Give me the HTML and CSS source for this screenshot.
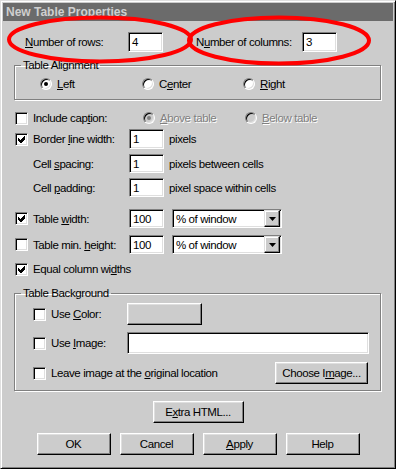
FILE: index.html
```html
<!DOCTYPE html>
<html>
  <head>
    <meta charset="UTF-8">
    <title>New Table Properties</title>
    <link rel="stylesheet" href="styles.css">
  </head>
  <body>
    <div class="window">
      <div class="titlebar">New Table Properties</div>

      <div class="row counts">
        <span class="lbl lbl-rows"><u>N</u>umber of rows:</span>
        <span class="field w35">4</span>
        <span class="lbl lbl-cols">N<u>u</u>mber of columns:</span>
        <span class="field w35">3</span>
      </div>

      <fieldset class="group align">
        <legend>Table Alignment</legend>
        <div class="radios">
          <span class="opt"><i class="radio on"></i><u>L</u>eft</span>
          <span class="opt"><i class="radio"></i>C<u>e</u>nter</span>
          <span class="opt"><i class="radio"></i><u>R</u>ight</span>
        </div>
      </fieldset>

      <div class="row line caption">
        <i class="check"></i>
        <span class="lbl w110">Include cap<u>t</u>ion:</span>
        <span class="opt off w102"><i class="radio on"></i><u>A</u>bove table</span>
        <span class="opt off"><i class="radio"></i><u>B</u>elow table</span>
      </div>

      <div class="row line r-border">
        <i class="check on"><svg width="7" height="7" viewBox="0 0 7 7"><polygon points="0,2 2,4 6,0 7,0 7,3 3,7 2,7 0,5"/></svg></i>
        <span class="lbl w96">Border <u>l</u>ine width:</span>
        <span class="field w35">1</span>
        <span class="unit">pixels</span>
      </div>

      <div class="row line short r-spacing">
        <i class="nobox"></i>
        <span class="lbl w96">Cell <u>s</u>pacing:</span>
        <span class="field w35">1</span>
        <span class="unit">pixels between cells</span>
      </div>

      <div class="row line short r-padding">
        <i class="nobox"></i>
        <span class="lbl w96">Cell <u>p</u>adding:</span>
        <span class="field w35">1</span>
        <span class="unit">pixel space within cells</span>
      </div>

      <div class="row line short r-width">
        <i class="check on"><svg width="7" height="7" viewBox="0 0 7 7"><polygon points="0,2 2,4 6,0 7,0 7,3 3,7 2,7 0,5"/></svg></i>
        <span class="lbl w96">Table <u>w</u>idth:</span>
        <span class="field w35">100</span>
        <span class="field select"><span class="sel-text">% of window</span><span class="drop"><svg width="7" height="4" viewBox="0 0 7 4"><polygon points="0,0 7,0 3.5,4"/></svg></span></span>
      </div>

      <div class="row line short r-height">
        <i class="check"></i>
        <span class="lbl w96">Table min. <u>h</u>eight:</span>
        <span class="field w35">100</span>
        <span class="field select"><span class="sel-text">% of window</span><span class="drop"><svg width="7" height="4" viewBox="0 0 7 4"><polygon points="0,0 7,0 3.5,4"/></svg></span></span>
      </div>

      <div class="row line r-equal">
        <i class="check on"><svg width="7" height="7" viewBox="0 0 7 7"><polygon points="0,2 2,4 6,0 7,0 7,3 3,7 2,7 0,5"/></svg></i>
        <span class="lbl">Equal column wi<u>d</u>ths</span>
      </div>

      <fieldset class="group background">
        <legend>Table Background</legend>
        <div class="row bg-row first">
          <i class="check"></i>
          <span class="lbl w76">Use <u>C</u>olor:</span>
          <span class="button color-btn"></span>
        </div>
        <div class="row bg-row">
          <i class="check"></i>
          <span class="lbl w76">Use <u>I</u>mage:</span>
          <span class="field image-path"></span>
        </div>
        <div class="row bg-row">
          <i class="check"></i>
          <span class="lbl grow">Leave image at the <u>o</u>riginal location</span>
          <span class="button choose-btn">Choose I<u>m</u>age...</span>
        </div>
      </fieldset>

      <div class="row extra">
        <span class="button extra-btn">E<u>x</u>tra HTML...</span>
      </div>

      <div class="row actions">
        <span class="button act">OK</span>
        <span class="button act">Cancel</span>
        <span class="button act"><u>A</u>pply</span>
        <span class="button act">Help</span>
      </div>

      <!-- red annotation marks drawn over the dialog -->
      <svg class="marks" width="396" height="469" viewBox="0 0 396 469">
        <ellipse cx="100" cy="39.5" rx="91" ry="22" />
        <ellipse cx="279" cy="40.5" rx="90" ry="23" />
      </svg>
    </div>
  </body>
</html>
```

FILE: styles.css
```css
html, body {
    margin: 0;
    padding: 0;
    background: #cccccc;
}
body {
    font-family: "Liberation Sans", Arial, sans-serif;
    font-size: 11.5px;
    letter-spacing: -0.4px;
    color: #000;
}
u {
    text-underline-offset: 1px;
}

.window {
    position: relative;
    box-sizing: border-box;
    width: 396px;
    height: 469px;
    padding: 2px;
    background: #cccccc;
    border: 1px solid;
    border-color: #dfdfdf #000 #000 #dfdfdf;
    box-shadow: inset 1px 1px 0 #fff, inset -1px -1px 0 #808080;
}
.titlebar {
    height: 18px;
    line-height: 18px;
    padding-left: 3px;
    background: #6b6b6b;
    color: #cfcfcf;
    font-weight: bold;
    font-size: 12px;
    letter-spacing: 0;
}

.row {
    display: flex;
    align-items: center;
}
.lbl {
    white-space: nowrap;
}
.w35 { width: 35px; }
.w76 { width: 76px; }
.w96 { width: 96px; }
.w102 { width: 102px; }
.w110 { width: 110px; }
.grow { flex: 1; }

/* sunken text box */
.field {
    box-sizing: border-box;
    height: 100%;
    padding: 0 3px;
    display: flex;
    align-items: center;
    background: #fff;
    border: 1px solid;
    border-color: #808080 #fff #fff #808080;
    box-shadow: inset 1px 1px 0 #000, inset -1px -1px 0 #dfdfdf;
}

/* raised push button */
.button {
    box-sizing: border-box;
    display: flex;
    align-items: center;
    justify-content: center;
    height: 22px;
    background: #cccccc;
    border: 1px solid;
    border-color: #fff #000 #000 #fff;
    box-shadow: inset -1px -1px 0 #808080, inset 1px 1px 0 #dfdfdf;
}

.check {
    box-sizing: border-box;
    display: flex;
    align-items: center;
    justify-content: center;
    width: 13px;
    height: 13px;
    margin-right: 5px;
    background: #fff;
    border: 1px solid;
    border-color: #808080 #fff #fff #808080;
    box-shadow: inset 1px 1px 0 #000, inset -1px -1px 0 #dfdfdf;
}
.check svg {
    fill: #000;
    shape-rendering: crispEdges;
}
.nobox {
    width: 13px;
    margin-right: 5px;
}

.opt {
    display: flex;
    align-items: center;
    white-space: nowrap;
}
.radio {
    position: relative;
    box-sizing: border-box;
    width: 12px;
    height: 12px;
    margin-right: 5px;
    border-radius: 50%;
    background: #fff;
    border: 1px solid;
    border-color: #808080 #fff #fff #808080;
    box-shadow: inset 1px 1px 0 #000, inset -1px -1px 0 #dfdfdf;
}
.radio.on::after {
    content: "";
    position: absolute;
    left: 3px;
    top: 3px;
    width: 4px;
    height: 4px;
    border-radius: 50%;
    background: #000;
}
.opt.off {
    color: #808080;
    text-shadow: 1px 1px 0 #fff;
}
.opt.off .radio {
    background: #cccccc;
}
.opt.off .radio.on::after {
    background: #808080;
}

/* top line: rows and columns */
.counts {
    height: 20px;
    margin-top: 11px;
    padding-left: 22px;
}
.lbl-rows { width: 103px; }
.lbl-cols { width: 106px; margin-left: 33px; }

/* group boxes */
.group {
    box-sizing: border-box;
    width: 367px;
    margin: 0 0 0 11px;
    padding: 0;
    border: 1px solid #808080;
    box-shadow: inset 1px 1px 0 #fff, 1px 1px 0 #fff;
}
.group legend {
    margin-left: 6px;
    padding: 0 2px;
    line-height: 15px;
}
.align {
    margin-top: 6px;
}
.radios {
    display: grid;
    grid-template-columns: 102px 101px auto;
    height: 14px;
    margin: 4px 0 8px 25px;
}

/* option lines */
.line {
    height: 20px;
    padding-left: 12px;
}
.line.short { height: 19px; }
.caption { margin-top: 8px; }
.r-border { margin-top: 1px; }
.r-spacing { margin-top: 5px; }
.r-padding { margin-top: 5px; }
.r-width { margin-top: 12px; }
.r-height { margin-top: 7px; }
.r-equal { margin-top: 6px; height: 18px; }
.unit {
    margin-left: 5px;
    white-space: nowrap;
}
.select {
    width: 110px;
    margin-left: 8px;
    padding: 1px 1px 1px 3px;
    justify-content: space-between;
}
.drop {
    box-sizing: border-box;
    display: flex;
    align-items: center;
    justify-content: center;
    width: 16px;
    height: 17px;
    background: #cccccc;
    border: 1px solid;
    border-color: #dfdfdf #000 #000 #dfdfdf;
    box-shadow: inset -1px -1px 0 #808080, inset 1px 1px 0 #fff;
}
.drop svg { fill: #000; }

/* table background box */
.background {
    margin-top: 8px;
    padding-bottom: 6px;
}
.bg-row {
    height: 22px;
    margin-top: 7px;
    padding-left: 18px;
    padding-right: 11px;
}
.bg-row:last-child { margin-top: 8px; padding-right: 12px; }
.bg-row.first { margin-top: 2px; }
.color-btn { width: 75px; }
.image-path { flex: 1; }
.choose-btn { width: 93px; }

/* buttons at the bottom */
.extra {
    justify-content: center;
    margin-top: 10px;
}
.extra-btn { width: 91px; }
.actions {
    justify-content: center;
    gap: 9px;
    margin-top: 10px;
}
.act { width: 74px; }

.marks {
    position: absolute;
    left: -1px;
    top: -1px;
    pointer-events: none;
}
.marks ellipse {
    fill: none;
    stroke: #ff0000;
    stroke-width: 4;
}
```
